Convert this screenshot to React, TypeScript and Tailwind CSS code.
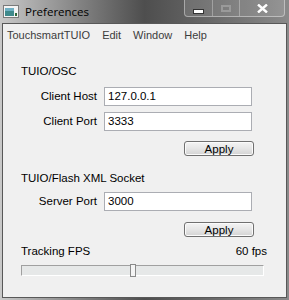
import type { ReactNode } from "react";

const ui = { fontFamily: '"Liberation Sans", Arial, sans-serif' };

function Field({ label, value }: { label: string; value: string }) {
  return (
    <div className="flex items-center">
      <div className="w-[77px] pr-[1px] text-right text-[11.5px] leading-[19px] text-black">{label}</div>
      <div className="ml-[6px] h-[19px] w-[148px] border border-[#abadb3] bg-white pl-[3px] text-[11.5px] leading-[17px] text-black">
        {value}
      </div>
    </div>
  );
}

function ApplyButton({ className }: { className?: string }) {
  return (
    <div className={`flex justify-end pr-[32px] ${className ?? ""}`}>
      <button className="h-[15px] w-[70px] rounded-[3px] border border-[#707070] bg-gradient-to-b from-[#f4f4f4] via-[#e6e6e6] to-[#d3d3d3] text-[11.5px] leading-[12px] text-black shadow-[inset_0_0_0_1px_#fbfbfb]">
        Apply
      </button>
    </div>
  );
}

function CaptionButton({ children, className }: { children: ReactNode; className?: string }) {
  return (
    <div className={`flex h-full items-center justify-center border-r border-white/30 last:border-r-0 ${className ?? ""}`}>
      {children}
    </div>
  );
}

export default function App() {
  return (
    <div
      className="flex h-[300px] w-[289px] flex-col bg-gradient-to-r from-[#c9c9c9] via-[#4e4e4e] to-[#8a8a8a] px-[2px] pb-[2px]"
      style={ui}
    >
      <div className="relative flex h-[23px] shrink-0 items-center">
        <svg width="16" height="13" viewBox="0 0 16 13" className="ml-[1px] mt-[-1px]">
          <rect x="0.5" y="0.5" width="15" height="12" fill="#f4f4f4" stroke="#7a7a7a" />
          <rect x="2" y="3" width="9" height="8" fill="#3f8a8c" />
          <rect x="2" y="3" width="9" height="3" fill="#6fb0c4" />
          <rect x="12" y="8" width="2" height="3" fill="#2f6a3a" />
        </svg>
        <span className="ml-[6px] text-[11.5px] leading-[16px] text-black" style={{ fontFamily: '"Open Sans", sans-serif' }}>
          Preferences
        </span>
        <div className="absolute right-[2px] top-0 flex h-[17px] w-[101px] overflow-hidden rounded-b-[4px] border border-t-0 border-white/40 bg-white/10">
          <CaptionButton className="w-[28px]">
            <div className="mt-[6px] h-[3px] w-[9px] bg-white shadow-[0_0_0_1px_#333]" />
          </CaptionButton>
          <CaptionButton className="w-[27px]">
            <div className="h-[7px] w-[10px] border-2 border-[#9a9a9a]" />
          </CaptionButton>
          <CaptionButton className="flex-1">
            <svg width="11" height="9" viewBox="0 0 11 9">
              <path d="M1 0.5 L10 8.5 M10 0.5 L1 8.5" stroke="#ffffff" strokeWidth="2.4" />
            </svg>
          </CaptionButton>
        </div>
      </div>

      <div className="flex flex-1 flex-col border border-[#585858] bg-[#f0f0f0]">
        <div className="flex h-[22px] items-center gap-[12px] pl-[4px] text-[11px] text-[#3c3c3c]">
          <span>TouchsmartTUIO</span>
          <span>Edit</span>
          <span>Window</span>
          <span>Help</span>
        </div>

        <div className="flex flex-col pl-[18px] text-[11.5px] text-black">
          <div className="mt-[18px] leading-[14px]">TUIO/OSC</div>
          <div className="mt-[9px] flex flex-col gap-[6px]">
            <Field label="Client Host" value="127.0.0.1" />
            <Field label="Client Port" value="3333" />
          </div>
          <ApplyButton className="mt-[10px]" />

          <div className="mt-[15px] leading-[14px]">TUIO/Flash XML Socket</div>
          <div className="mt-[7px]">
            <Field label="Server Port" value="3000" />
          </div>
          <ApplyButton className="mt-[11px]" />

          <div className="mt-[7px] flex justify-between pr-[19px] leading-[14px]">
            <span>Tracking FPS</span>
            <span>60 fps</span>
          </div>
          <div className="relative mt-[7px] h-[11px] w-[243px] border border-[#a0a0a0] border-b-white border-r-white bg-[#e6e8e8]">
            <div className="absolute left-[108px] top-[-2px] h-[13px] w-[6px] border border-[#8a8a8a] bg-[#f4f4f4]" />
          </div>
        </div>
      </div>
    </div>
  );
}
